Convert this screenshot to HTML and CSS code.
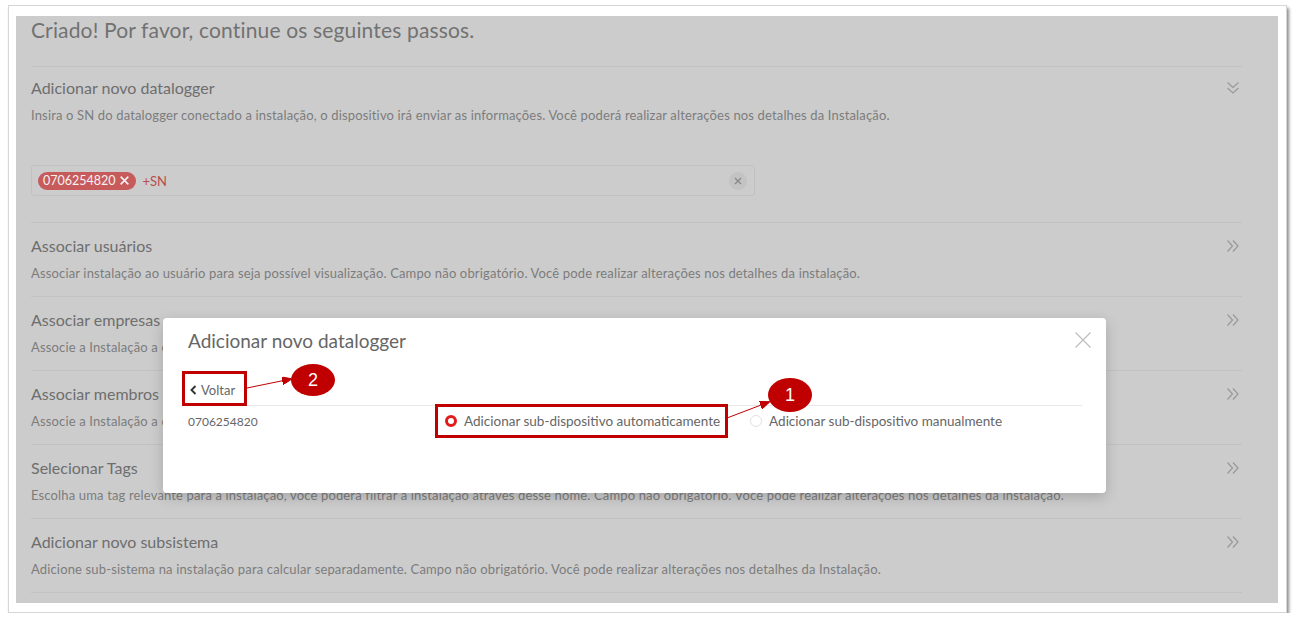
FILE: index.html
```html
<!DOCTYPE HTML>
<html>
<head>
<meta http-equiv="Content-Type" content="text/html; charset=utf-8">
<title>Nova instalação</title>
<link rel="stylesheet" href="styles.css">
</head>
<body>
	<div class="shot">
		<div class="page">
			<h2 class="title">Criado! Por favor, continue os seguintes passos.</h2>

			<div class="step step-open">
				<div class="step-head">
					<div>
						<h4>Adicionar novo datalogger</h4>
						<p>Insira o SN do datalogger conectado a instalação, o dispositivo irá enviar as informações. Você poderá realizar alterações nos detalhes da Instalação.</p>
					</div>
					<svg class="chev" viewBox="0 0 14 14"><path d="M1.5 1.5L7 6.5L12.5 1.5M1.5 7L7 12L12.5 7"/></svg>
				</div>
				<div class="sn-input">
					<span class="chip">0706254820<svg viewBox="0 0 10 10"><path d="M1.5 1.5L8.5 8.5M8.5 1.5L1.5 8.5"/></svg></span>
					<span class="add-sn">+SN</span>
					<span class="clear"><svg viewBox="0 0 10 10"><path d="M2 2L8 8M8 2L2 8"/></svg></span>
				</div>
			</div>

			<div class="step">
				<div class="step-head">
					<div>
						<h4>Associar usuários</h4>
						<p>Associar instalação ao usuário para seja possível visualização. Campo não obrigatório. Você pode realizar alterações nos detalhes da instalação.</p>
					</div>
					<svg class="chev" viewBox="0 0 14 14"><path d="M1.5 1.5L6.5 7L1.5 12.5M7 1.5L12 7L7 12.5"/></svg>
				</div>
			</div>

			<div class="step">
				<div class="step-head">
					<div>
						<h4>Associar empresas</h4>
						<p>Associe a Instalação a empresas. Campo não obrigatório. Você pode realizar alterações nos detalhes da instalação.</p>
					</div>
					<svg class="chev" viewBox="0 0 14 14"><path d="M1.5 1.5L6.5 7L1.5 12.5M7 1.5L12 7L7 12.5"/></svg>
				</div>
			</div>

			<div class="step">
				<div class="step-head">
					<div>
						<h4>Associar membros</h4>
						<p>Associe a Instalação a outros membros. Campo não obrigatório. Você pode realizar alterações nos detalhes da instalação.</p>
					</div>
					<svg class="chev" viewBox="0 0 14 14"><path d="M1.5 1.5L6.5 7L1.5 12.5M7 1.5L12 7L7 12.5"/></svg>
				</div>
			</div>

			<div class="step">
				<div class="step-head">
					<div>
						<h4>Selecionar Tags</h4>
						<p>Escolha uma tag relevante para a instalação, você poderá filtrar a instalação através desse nome. Campo não obrigatório. Você pode realizar alterações nos detalhes da instalação.</p>
					</div>
					<svg class="chev" viewBox="0 0 14 14"><path d="M1.5 1.5L6.5 7L1.5 12.5M7 1.5L12 7L7 12.5"/></svg>
				</div>
			</div>

			<div class="step">
				<div class="step-head">
					<div>
						<h4>Adicionar novo subsistema</h4>
						<p>Adicione sub-sistema na instalação para calcular separadamente. Campo não obrigatório. Você pode realizar alterações nos detalhes da Instalação.</p>
					</div>
					<svg class="chev" viewBox="0 0 14 14"><path d="M1.5 1.5L6.5 7L1.5 12.5M7 1.5L12 7L7 12.5"/></svg>
				</div>
			</div>

			<!-- janela modal -->
			<div class="modal">
				<div class="modal-title">Adicionar novo datalogger</div>
				<svg class="modal-close" viewBox="0 0 16 16"><path d="M0.5 0.5L15.5 15.5M15.5 0.5L0.5 15.5"/></svg>
				<div class="back"><svg viewBox="0 0 7 10"><path d="M5.5 1L1.5 5L5.5 9"/></svg>Voltar</div>
				<div class="modal-row">
					<span class="sn">0706254820</span>
					<label class="radio checked"><i></i>Adicionar sub-dispositivo automaticamente</label>
					<label class="radio"><i></i>Adicionar sub-dispositivo manualmente</label>
				</div>
			</div>

			<!-- marcações -->
			<div class="mark mark-back"></div>
			<div class="mark mark-auto"></div>
			<svg class="arrows" width="1262" height="587">
				<defs>
					<marker id="head" markerWidth="10" markerHeight="8" refX="9" refY="4" orient="auto" markerUnits="userSpaceOnUse">
						<path d="M0 0L10 4L0 8z" fill="#c00000"/>
					</marker>
				</defs>
				<line x1="231" y1="372" x2="275" y2="363" marker-end="url(#head)"/>
				<line x1="711" y1="402" x2="753" y2="386" marker-end="url(#head)"/>
			</svg>
			<div class="bubble bubble-2">2</div>
			<div class="bubble bubble-1">1</div>
		</div>
	</div>
</body>
</html>
```

FILE: styles.css
```css
/* moldura da captura */
body {
	margin: 0;
	background: #fff;
	font-family: Lato, "Open Sans", sans-serif;
}

.shot {
	margin: 5px 0 0 8px;
	width: 1279px;
	height: 608px;
	box-sizing: border-box;
	border: 1px solid #d6d6d6;
	padding: 10px 8px 9px 7px;
	background: #fff;
	box-shadow: 2px 3px 3px rgba(0, 0, 0, .45);
}

/* página escurecida pela máscara */
.page {
	position: relative;
	height: 100%;
	box-sizing: border-box;
	padding: 0 36px 0 15px;
	background: #cccccc;
	overflow: hidden;
}

.title {
	margin: 0;
	height: 50px;
	font-size: 21px;
	font-weight: 400;
	letter-spacing: .15px;
	line-height: 28px;
	color: #727272;
	border-bottom: 1px solid #c2c2c2;
}

.step {
	padding: 13px 0 14px;
	border-bottom: 1px solid #c2c2c2;
}

.step:last-of-type {
	padding-bottom: 13px;
}

.step-open {
	padding-top: 11px;
	padding-bottom: 26px;
}

.step-head {
	display: flex;
	justify-content: space-between;
	align-items: flex-start;
}

.step h4 {
	margin: 0;
	font-size: 16px;
	font-weight: 400;
	line-height: 20px;
	color: #6e6e6e;
}

.step p {
	margin: 8px 0 0;
	font-size: 13px;
	letter-spacing: .15px;
	line-height: 18px;
	color: #7c7c7c;
	white-space: nowrap;
}

.chev {
	width: 14px;
	height: 14px;
	margin: 3px 2px 0 0;
	fill: none;
	stroke: #999;
	stroke-width: 1.2;
}

/* campo SN */
.sn-input {
	margin-top: 41px;
	width: 724px;
	height: 31px;
	box-sizing: border-box;
	border: 1px solid #c1c1c1;
	border-radius: 3px;
	display: flex;
	align-items: center;
	padding: 0 7px 0 6px;
}

.chip {
	height: 18px;
	border-radius: 9px;
	background: #c75b5b;
	color: #f3f3f3;
	font-size: 12.5px;
	padding: 0 6px 0 5px;
	display: flex;
	align-items: center;
	gap: 3px;
}

.chip svg {
	width: 11px;
	height: 11px;
	fill: none;
	stroke: #f3f3f3;
	stroke-width: 1.4;
}

.add-sn {
	margin-left: 7px;
	font-size: 13px;
	color: #b94c4c;
}

.clear {
	margin-left: auto;
	width: 18px;
	height: 18px;
	border-radius: 50%;
	background: #c3c3c3;
	display: flex;
	align-items: center;
	justify-content: center;
}

.clear svg {
	width: 10px;
	height: 10px;
	fill: none;
	stroke: #888;
	stroke-width: 1.3;
}

/* modal */
.modal {
	position: absolute;
	left: 147px;
	top: 302px;
	width: 943px;
	height: 175px;
	box-sizing: border-box;
	padding: 11px 24px 0 25px;
	background: #fff;
	border-radius: 4px;
	box-shadow: 0 4px 14px rgba(0, 0, 0, .18);
}

.modal-title {
	font-size: 19px;
	line-height: 24px;
	color: #666;
}

.modal-close {
	position: absolute;
	top: 14px;
	right: 15px;
	width: 16px;
	height: 16px;
	fill: none;
	stroke: #bdbdbd;
	stroke-width: 1.2;
}

.back {
	margin-top: 28px;
	padding: 0 0 6px 2px;
	line-height: 18px;
	font-size: 13px;
	color: #666;
	border-bottom: 1px solid #e9e9e9;
	display: flex;
	align-items: center;
}

.back svg {
	width: 7px;
	height: 10px;
	margin-right: 4px;
	fill: none;
	stroke: #333;
	stroke-width: 1.9;
}

.modal-row {
	display: flex;
	align-items: center;
	padding-top: 7px;
	line-height: 18px;
	font-size: 13.5px;
	color: #666;
}

.sn {
	width: 257px;
	font-size: 12px;
}

.radio {
	display: flex;
	align-items: center;
	margin-top: -3px;
}

.radio + .radio {
	margin-left: 30px;
}

.radio i {
	width: 12px;
	height: 12px;
	box-sizing: border-box;
	border: 1px solid #e2e2e2;
	border-radius: 50%;
	margin-right: 7px;
}

.radio.checked i {
	border: 3.5px solid #e01b1b;
}

/* marcações vermelhas */
.mark {
	position: absolute;
	border: 3px solid #c00000;
	box-sizing: border-box;
}

.mark-back {
	left: 166px;
	top: 355px;
	width: 65px;
	height: 35px;
}

.mark-auto {
	left: 419px;
	top: 388px;
	width: 293px;
	height: 34px;
}

.arrows {
	position: absolute;
	left: 0;
	top: 0;
	stroke: #c00000;
	stroke-width: 1;
}

.bubble {
	position: absolute;
	width: 44px;
	height: 32px;
	border-radius: 50%;
	background: #c00000;
	color: #fff;
	font: 18px "Liberation Sans", sans-serif;
	display: flex;
	align-items: center;
	justify-content: center;
}

.bubble-2 {
	left: 275px;
	top: 348px;
}

.bubble-1 {
	left: 752px;
	top: 362px;
	height: 34px;
}
```
